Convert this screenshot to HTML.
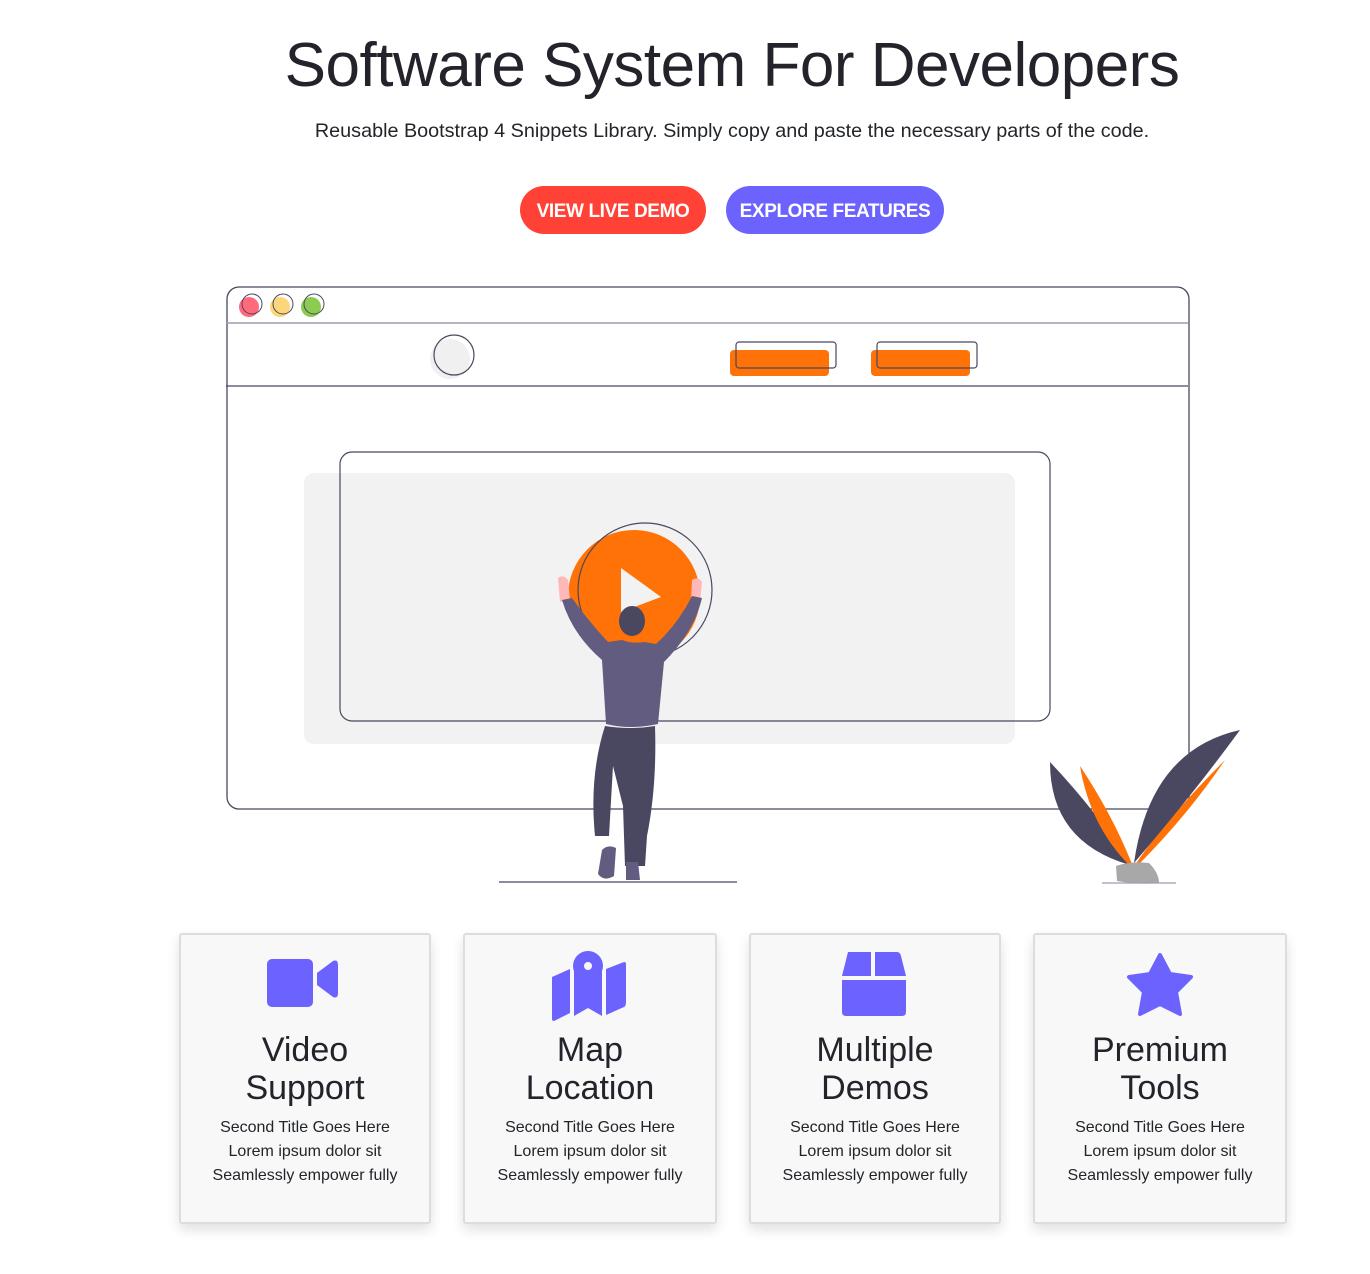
<!DOCTYPE html>
<html><head><meta charset="utf-8">
<style>
*{margin:0;padding:0;box-sizing:border-box}
body{width:1370px;height:1274px;background:#fff;position:relative;font-family:"Liberation Sans",sans-serif;color:#212529;overflow:hidden}
h1{position:absolute;left:0;width:1464px;top:30px;text-align:center;font-size:62px;font-weight:500;letter-spacing:-0.5px;color:#23232b}
.sub{position:absolute;left:0;width:1464px;top:120px;text-align:center;font-size:19.8px;color:#212529}
.btn{position:absolute;top:186px;height:48px;border-radius:24px;color:#fff;font-weight:bold;font-size:19px;letter-spacing:-0.4px;line-height:52px;text-align:center}
.card{position:absolute;top:933px;height:291px;background:#f8f8f8;border:2px solid #ddd;border-radius:3px;box-shadow:0 6px 12px rgba(0,0,0,.12);text-align:center}
.card svg{position:absolute;left:50%;transform:translateX(-50%);top:16px}
.card h3{position:absolute;left:0;right:0;top:96px;font-size:34px;font-weight:400;line-height:38px;color:#23232b}
.card p{position:absolute;left:0;right:0;top:181px;font-size:16px;line-height:24px;color:#212529}
</style></head><body>
<h1>Software System For Developers</h1>
<div class="sub">Reusable Bootstrap 4 Snippets Library. Simply copy and paste the necessary parts of the code.</div>
<div class="btn" style="left:520px;width:186px;background:#ff4136">VIEW LIVE DEMO</div>
<div class="btn" style="left:726px;width:218px;background:#6c63ff">EXPLORE FEATURES</div>

<svg width="1370" height="900" style="position:absolute;left:0;top:0" viewBox="0 0 1370 900">
<rect x="227" y="287" width="962" height="522" rx="12" fill="none" stroke="#4a4760" stroke-width="1.3"/>
<line x1="226" y1="323" x2="1188" y2="323" stroke="#9e9cae" stroke-width="1.5"/>
<line x1="226" y1="386" x2="1188" y2="386" stroke="#4a4760" stroke-width="1.3"/>
<circle cx="249" cy="307" r="10" fill="#ff6b7a"/><circle cx="252" cy="304" r="10" fill="none" stroke="#4a4760"/>
<circle cx="280" cy="307" r="10" fill="#fcd67a"/><circle cx="283" cy="304" r="10" fill="none" stroke="#4a4760"/>
<circle cx="311" cy="307" r="10" fill="#8bcb50"/><circle cx="314" cy="304" r="10" fill="none" stroke="#4a4760"/>
<circle cx="450" cy="359" r="20" fill="#f0f0f0"/><circle cx="454" cy="355" r="20" fill="none" stroke="#4a4760" stroke-width="1.2"/>
<rect x="730" y="350" width="99" height="26" rx="4" fill="#ff7208"/>
<rect x="736" y="342" width="100" height="26" rx="3" fill="none" stroke="#4a4760" stroke-width="1.2"/>
<rect x="871" y="350" width="99" height="26" rx="4" fill="#ff7208"/>
<rect x="877" y="342" width="100" height="26" rx="3" fill="none" stroke="#4a4760" stroke-width="1.2"/>
<rect x="304" y="473" width="711" height="271" rx="10" fill="#f2f2f2"/>
<rect x="340" y="452" width="710" height="269" rx="12" fill="none" stroke="#4a4760" stroke-width="1.2"/>
<circle cx="634" cy="596" r="66" fill="#ff7208"/>
<circle cx="645" cy="590" r="67" fill="none" stroke="#4a4760" stroke-width="1.2"/>
<polygon points="621,568 621,612 661,597" fill="#f2f2f2"/>
<path d="M558,578 q5,-4 10,2 l2,20 l-10,2z" fill="#ffb8b8"/>
<path d="M692,580 q6,-4 10,2 l-2,20 l-9,-1z" fill="#ffb8b8"/>
<path d="M562,600 l10,-2 q18,25 36,44 l14,-2 q10,4 22,2 l12,2 q22,-20 36,-48 l10,2 q-8,34 -38,64 l-6,62 q-28,6 -52,0 l-4,-64 q-30,-26 -40,-60z" fill="#625c80"/>
<path d="M605,726 q25,4 50,0 q2,60 -8,110 l-2,30 l-20,0 l-2,-60 l-10,-40 l-4,70 l-14,0 q-6,-60 10,-110z" fill="#4a4760"/>
<path d="M602,850 q6,-6 14,-2 l-2,28 q-10,6 -16,-2z" fill="#625c80"/>
<path d="M626,862 l12,0 l2,18 l-14,0z" fill="#625c80"/>
<ellipse cx="632" cy="621" rx="13" ry="15" fill="#4a4760"/>
<line x1="499" y1="882" x2="737" y2="882" stroke="#4a4760" stroke-width="1.3"/>
<path d="M1050,762 q0,80 80,103 q-30,-50 -80,-103z" fill="#4a4760"/>
<path d="M1080,766 q10,60 50,100 l2,-2 q-20,-50 -52,-98z" fill="#ff7208"/>
<path d="M1225,760 q-60,60 -90,105 l3,0 q50,-50 87,-105z" fill="#ff7208"/>
<path d="M1240,730 q-90,20 -106,133 q60,-70 106,-133z" fill="#4a4760"/>
<path d="M1116,866 q15,-5 33,-3 q10,10 10,20 q-20,2 -42,-2z" fill="#a8a8a8"/>
<line x1="1102" y1="883" x2="1176" y2="883" stroke="#9e9cae" stroke-width="1.3"/>
</svg>

<div class="card" style="left:179px;width:252px">
<svg width="76" height="56" viewBox="0 0 76 56"><rect x="0" y="11" width="46" height="48" rx="5" fill="#6c63ff" transform="translate(0,-3)"/><path d="M50,22 l16,-12 q5,-2 5,4 v28 q0,6 -5,4 l-16,-12z" fill="#6c63ff"/></svg>
<h3>Video<br>Support</h3>
<p>Second Title Goes Here<br>Lorem ipsum dolor sit<br>Seamlessly empower fully</p></div>
<div class="card" style="left:463px;width:254px">
<svg width="76" height="72" viewBox="0 0 76 72" style="top:16px"><path d="M0,26 l18,-8 v44 l-16,8 q-2,0 -2,-2z" fill="#6c63ff"/><path d="M22,20 l14,20 l14,-20 v45 l-14,-8 l-14,8z" fill="#6c63ff"/><path d="M54,18 l18,-7 q2,0 2,2 v38 q0,4 -2,5 l-18,8z" fill="#6c63ff"/><path d="M36,0 a15,15 0 0 1 15,15 q0,9 -15,26 q-15,-17 -15,-26 a15,15 0 0 1 15,-15z" fill="#6c63ff"/><circle cx="36" cy="15" r="4" fill="#f8f8f8"/></svg>
<h3>Map<br>Location</h3>
<p>Second Title Goes Here<br>Lorem ipsum dolor sit<br>Seamlessly empower fully</p></div>
<div class="card" style="left:749px;width:252px">
<svg width="66" height="66" viewBox="0 0 66 66" style="top:17px"><path d="M6,0 h23 v24 h-29 l5,-20z" fill="#6c63ff"/><path d="M33,0 h22 q3,0 4,4 l5,20 h-31z" fill="#6c63ff"/><path d="M0,28 h64 v32 q0,4 -4,4 h-56 q-4,0 -4,-4z" fill="#6c63ff"/></svg>
<h3>Multiple<br>Demos</h3>
<p>Second Title Goes Here<br>Lorem ipsum dolor sit<br>Seamlessly empower fully</p></div>
<div class="card" style="left:1033px;width:254px">
<svg width="70" height="66" viewBox="0 0 70 66" style="top:18px"><path d="M35,2 l10,19 l21,3 l-15,15 l4,22 l-20,-10 l-20,10 l4,-22 l-15,-15 l21,-3z" fill="#6c63ff" stroke="#6c63ff" stroke-width="4" stroke-linejoin="round"/></svg>
<h3>Premium<br>Tools</h3>
<p>Second Title Goes Here<br>Lorem ipsum dolor sit<br>Seamlessly empower fully</p></div>
</body></html>
